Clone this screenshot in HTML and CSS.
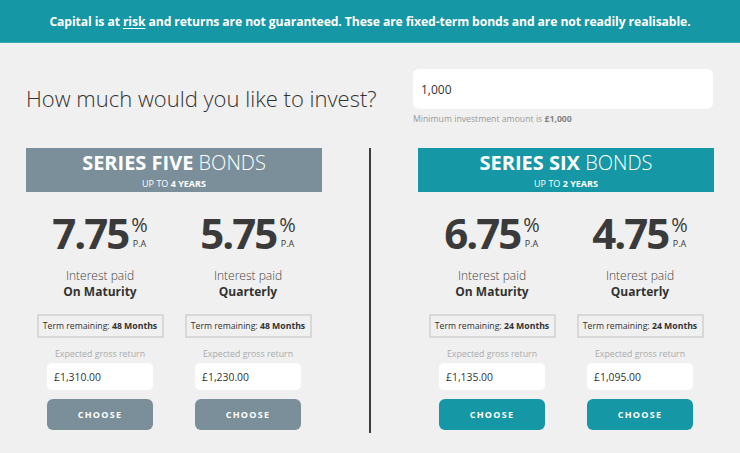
FILE: index.html
```html
<!DOCTYPE html>
<html lang="en">
<head>
<meta charset="utf-8">
<title>Bonds</title>
<link rel="stylesheet" href="styles.css">
</head>
<body>
<div class="banner"><p class="banner-text">Capital is at <u>risk</u> and returns are not guaranteed. These are fixed-term bonds and are not readily realisable.</p></div>
<main class="page">
  <div class="invest-row">
    <h1 class="invest-title">How much would you like to invest?</h1>
    <div class="invest-field">
      <div class="amount-input">1,000</div>
      <div class="helper">Minimum investment amount is <b>£1,000</b></div>
    </div>
  </div>
  <div class="series-wrap">
    <section class="series">
      <div class="series-head head-grey">
        <div class="series-title"><b>SERIES FIVE</b> BONDS</div>
        <div class="series-sub">UP TO <b>4 YEARS</b></div>
      </div>
      <div class="options">
        <div class="option">
          <div class="rate"><span class="rate-num">7.75</span><span class="rate-suffix"><span class="pct">%</span><span class="pa">P.A</span></span></div>
          <div class="paid">Interest paid</div>
          <div class="paid-when">On Maturity</div>
          <div class="term"><span>Term remaining: <b>48 Months</b></span></div>
          <div class="expected">Expected gross return</div>
          <div class="value">£1,310.00</div>
          <div class="choose btn-grey">CHOOSE</div>
        </div>
        <div class="option">
          <div class="rate"><span class="rate-num">5.75</span><span class="rate-suffix"><span class="pct">%</span><span class="pa">P.A</span></span></div>
          <div class="paid">Interest paid</div>
          <div class="paid-when">Quarterly</div>
          <div class="term"><span>Term remaining: <b>48 Months</b></span></div>
          <div class="expected">Expected gross return</div>
          <div class="value">£1,230.00</div>
          <div class="choose btn-grey">CHOOSE</div>
        </div>
      </div>
    </section>
    <div class="divider"></div>
    <section class="series">
      <div class="series-head head-teal">
        <div class="series-title"><b>SERIES SIX</b> BONDS</div>
        <div class="series-sub">UP TO <b>2 YEARS</b></div>
      </div>
      <div class="options">
        <div class="option">
          <div class="rate"><span class="rate-num">6.75</span><span class="rate-suffix"><span class="pct">%</span><span class="pa">P.A</span></span></div>
          <div class="paid">Interest paid</div>
          <div class="paid-when">On Maturity</div>
          <div class="term"><span>Term remaining: <b>24 Months</b></span></div>
          <div class="expected">Expected gross return</div>
          <div class="value">£1,135.00</div>
          <div class="choose btn-teal">CHOOSE</div>
        </div>
        <div class="option">
          <div class="rate"><span class="rate-num">4.75</span><span class="rate-suffix"><span class="pct">%</span><span class="pa">P.A</span></span></div>
          <div class="paid">Interest paid</div>
          <div class="paid-when">Quarterly</div>
          <div class="term"><span>Term remaining: <b>24 Months</b></span></div>
          <div class="expected">Expected gross return</div>
          <div class="value">£1,095.00</div>
          <div class="choose btn-teal">CHOOSE</div>
        </div>
      </div>
    </section>
  </div>
</main>
</body>
</html>
```
FILE: styles.css
```css
* { box-sizing: border-box; }
html, body { margin: 0; padding: 0; }
body {
  background: #f0f0f0;
  font-family: "Open Sans", "DejaVu Sans", sans-serif;
  color: #333;
  width: 740px;
  height: 453px;
  overflow: hidden;
}
.banner {
  height: 43px;
  background: #1597a5;
  color: #fff;
  display: flex;
  align-items: center;
  justify-content: center;
  border-bottom: 1px solid #3aa9b5;
}
.banner-text {
  margin: 0;
  font-weight: 700;
  font-size: 12.2px;
  letter-spacing: -0.1px;
  text-align: center;
}
.banner u { text-decoration-thickness: 1px; text-underline-offset: 2px; }
.page { padding: 0 26px; }
.invest-row {
  display: flex;
  align-items: center;
  justify-content: space-between;
  margin-top: 26px;
}
.invest-title {
  margin: 0;
  font-weight: 300;
  font-size: 22px;
  line-height: 30px;
  color: #333;
  padding-top: 1px;
}
.invest-field { width: 300px; margin-right: 1px; }
.amount-input {
  height: 40px;
  background: #fff;
  border-radius: 6px;
  padding: 0 8px;
  display: flex;
  align-items: center;
  font-size: 12px;
  color: #333;
}
.helper {
  margin-top: 4px;
  font-size: 8.7px;
  line-height: 12px;
  color: #9a9a9a;
}
.helper b { color: #858585; }
.series-wrap {
  display: flex;
  margin-top: 23px;
}
.series { width: 296px; padding-bottom: 3px; }
.divider {
  width: 2px;
  background: #3d3d3d;
  margin: 0 47px 0 47px;
}
.series-head {
  height: 44px;
  color: #fff;
  text-align: center;
  padding-top: 2px;
}
.head-grey { background: #7a8f99; }
.head-teal { background: #1597a5; }
.series-title {
  font-size: 20px;
  line-height: 26px;
  font-weight: 300;
}
.series-title b { font-weight: 700; }
.series-sub {
  font-size: 9px;
  line-height: 15px;
  font-weight: 400;
}
.series-sub b { font-weight: 700; }
.options { display: flex; }
.option {
  width: 148px;
  display: flex;
  flex-direction: column;
  align-items: center;
}
.rate {
  margin-top: 20px;
  display: flex;
  align-items: flex-start;
  height: 42px;
  color: #3a3a3a;
}
.rate-num {
  font-size: 42px;
  line-height: 42px;
  font-weight: 700;
  letter-spacing: -2px;
}
.rate-suffix {
  display: flex;
  flex-direction: column;
  align-items: center;
  margin-left: 3px;
}
.pct {
  font-size: 20px;
  line-height: 20px;
  font-weight: 400;
  margin-top: 3px;
}
.pa {
  font-size: 9px;
  line-height: 11px;
  margin-top: 3px;
}
.paid {
  margin-top: 14px;
  font-size: 12px;
  line-height: 16px;
  font-weight: 300;
  color: #444;
}
.paid-when {
  font-size: 12px;
  line-height: 16px;
  font-weight: 700;
  color: #333;
}
.term {
  margin-top: 14px;
  width: 127px;
  height: 24px;
  border: 2px solid #d8d8d8;
  text-align: center;
  font-size: 8.7px;
  line-height: 20px;
  color: #333;
  white-space: nowrap;
}
.term b { font-weight: 700; }
.expected {
  margin-top: 9px;
  font-size: 8.8px;
  line-height: 14px;
  color: #ababab;
}
.value {
  margin-top: 2px;
  width: 106px;
  height: 27px;
  background: #fff;
  border-radius: 5px;
  padding: 0 7px;
  display: flex;
  align-items: center;
  font-size: 10.4px;
  color: #333;
}
.choose {
  margin-top: 9px;
  width: 106px;
  height: 31px;
  border-radius: 6px;
  color: #fff;
  font-size: 9px;
  font-weight: 700;
  letter-spacing: 1.3px;
  display: flex;
  align-items: center;
  justify-content: center;
}
.btn-grey { background: #7a8f99; }
.btn-teal { background: #1597a5; }
```
